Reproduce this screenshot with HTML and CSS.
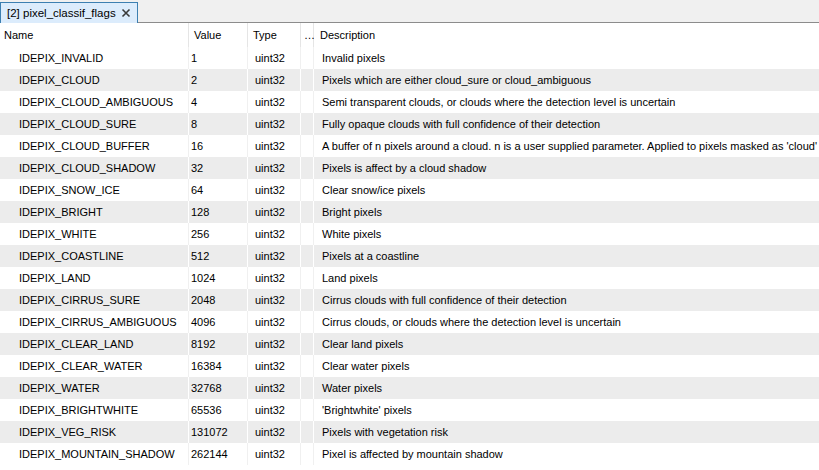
FILE: index.html
```html
<!DOCTYPE html>
<html>
<head>
<meta charset="utf-8">
<link rel="stylesheet" href="styles.css">
</head>
<body>
<div class="tabbar">
  <div class="tab"><span class="tab-title">[2] pixel_classif_flags</span><svg class="close" width="10" height="10" viewBox="0 0 10 10"><path d="M1.5 1.5 L8.5 8.5 M8.5 1.5 L1.5 8.5" stroke="#3a3a3a" stroke-width="1.6"/></svg></div>
</div>
<div class="table">
  <div class="row head">
    <div class="c name">Name</div><div class="c val">Value</div><div class="c type">Type</div><div class="c dots">…</div><div class="c desc">Description</div>
  </div>
  <div class="row"><div class="c name">IDEPIX_INVALID</div><div class="c val">1</div><div class="c type">uint32</div><div class="c dots"></div><div class="c desc">Invalid pixels</div></div>
  <div class="row alt"><div class="c name">IDEPIX_CLOUD</div><div class="c val">2</div><div class="c type">uint32</div><div class="c dots"></div><div class="c desc">Pixels which are either cloud_sure or cloud_ambiguous</div></div>
  <div class="row"><div class="c name">IDEPIX_CLOUD_AMBIGUOUS</div><div class="c val">4</div><div class="c type">uint32</div><div class="c dots"></div><div class="c desc">Semi transparent clouds, or clouds where the detection level is uncertain</div></div>
  <div class="row alt"><div class="c name">IDEPIX_CLOUD_SURE</div><div class="c val">8</div><div class="c type">uint32</div><div class="c dots"></div><div class="c desc">Fully opaque clouds with full confidence of their detection</div></div>
  <div class="row"><div class="c name">IDEPIX_CLOUD_BUFFER</div><div class="c val">16</div><div class="c type">uint32</div><div class="c dots"></div><div class="c desc">A buffer of n pixels around a cloud. n is a user supplied parameter. Applied to pixels masked as 'cloud'</div></div>
  <div class="row alt"><div class="c name">IDEPIX_CLOUD_SHADOW</div><div class="c val">32</div><div class="c type">uint32</div><div class="c dots"></div><div class="c desc">Pixels is affect by a cloud shadow</div></div>
  <div class="row"><div class="c name">IDEPIX_SNOW_ICE</div><div class="c val">64</div><div class="c type">uint32</div><div class="c dots"></div><div class="c desc">Clear snow/ice pixels</div></div>
  <div class="row alt"><div class="c name">IDEPIX_BRIGHT</div><div class="c val">128</div><div class="c type">uint32</div><div class="c dots"></div><div class="c desc">Bright pixels</div></div>
  <div class="row"><div class="c name">IDEPIX_WHITE</div><div class="c val">256</div><div class="c type">uint32</div><div class="c dots"></div><div class="c desc">White pixels</div></div>
  <div class="row alt"><div class="c name">IDEPIX_COASTLINE</div><div class="c val">512</div><div class="c type">uint32</div><div class="c dots"></div><div class="c desc">Pixels at a coastline</div></div>
  <div class="row"><div class="c name">IDEPIX_LAND</div><div class="c val">1024</div><div class="c type">uint32</div><div class="c dots"></div><div class="c desc">Land pixels</div></div>
  <div class="row alt"><div class="c name">IDEPIX_CIRRUS_SURE</div><div class="c val">2048</div><div class="c type">uint32</div><div class="c dots"></div><div class="c desc">Cirrus clouds with full confidence of their detection</div></div>
  <div class="row"><div class="c name">IDEPIX_CIRRUS_AMBIGUOUS</div><div class="c val">4096</div><div class="c type">uint32</div><div class="c dots"></div><div class="c desc">Cirrus clouds, or clouds where the detection level is uncertain</div></div>
  <div class="row alt"><div class="c name">IDEPIX_CLEAR_LAND</div><div class="c val">8192</div><div class="c type">uint32</div><div class="c dots"></div><div class="c desc">Clear land pixels</div></div>
  <div class="row"><div class="c name">IDEPIX_CLEAR_WATER</div><div class="c val">16384</div><div class="c type">uint32</div><div class="c dots"></div><div class="c desc">Clear water pixels</div></div>
  <div class="row alt"><div class="c name">IDEPIX_WATER</div><div class="c val">32768</div><div class="c type">uint32</div><div class="c dots"></div><div class="c desc">Water pixels</div></div>
  <div class="row"><div class="c name">IDEPIX_BRIGHTWHITE</div><div class="c val">65536</div><div class="c type">uint32</div><div class="c dots"></div><div class="c desc">'Brightwhite' pixels</div></div>
  <div class="row alt"><div class="c name">IDEPIX_VEG_RISK</div><div class="c val">131072</div><div class="c type">uint32</div><div class="c dots"></div><div class="c desc">Pixels with vegetation risk</div></div>
  <div class="row"><div class="c name">IDEPIX_MOUNTAIN_SHADOW</div><div class="c val">262144</div><div class="c type">uint32</div><div class="c dots"></div><div class="c desc">Pixel is affected by mountain shadow</div></div>
</div>
</body>
</html>
```
FILE: styles.css
```css
html, body {
  margin: 0;
  padding: 0;
  background: #ffffff;
  font-family: "Liberation Sans", Arial, sans-serif;
  font-size: 11px;
  color: #000;
  overflow: hidden;
}
.tabbar {
  height: 22px;
  background: #f0f0f0;
  border-bottom: 1px solid #8c8c8c;
  display: flex;
  align-items: flex-end;
}
.tab {
  width: 138px;
  height: 21px;
  box-sizing: border-box;
  border: 1px solid #3c7fb1;
  border-bottom: none;
  background: #dcecfc;
  display: flex;
  align-items: center;
  padding-left: 6px;
  margin-bottom: -1px;
  font-size: 11.5px;
  white-space: nowrap;
}
.tab-title { flex: 1; }
.close { margin-right: 6px; flex: none; }
.table { display: flex; flex-direction: column; }
.row {
  display: flex;
  height: 22px;
  align-items: stretch;
}
.row.head { height: 24px; }
.row.alt { background: #ececec; }
.c {
  box-sizing: border-box;
  display: flex;
  align-items: center;
  white-space: nowrap;
  border-right: 1px solid #f0f0f0;
  overflow: hidden;
}
.row.alt .c { border-right-color: #ffffff; }
.name { width: 189px; padding-left: 19px; }
.val { width: 59px; padding-left: 2px; }
.type { width: 53px; padding-left: 7px; }
.dots { width: 13px; }
.desc { flex: 1; padding-left: 8px; border-right: none; }
.head .c { border-right: 1px solid #e5e5e5; }
.head .name { padding-left: 4px; }
.head .val { padding-left: 5px; }
.head .type { padding-left: 5px; }
.head .dots { padding-left: 3px; overflow: visible; }
.head .desc { padding-left: 6px; border-right: none; }
```
